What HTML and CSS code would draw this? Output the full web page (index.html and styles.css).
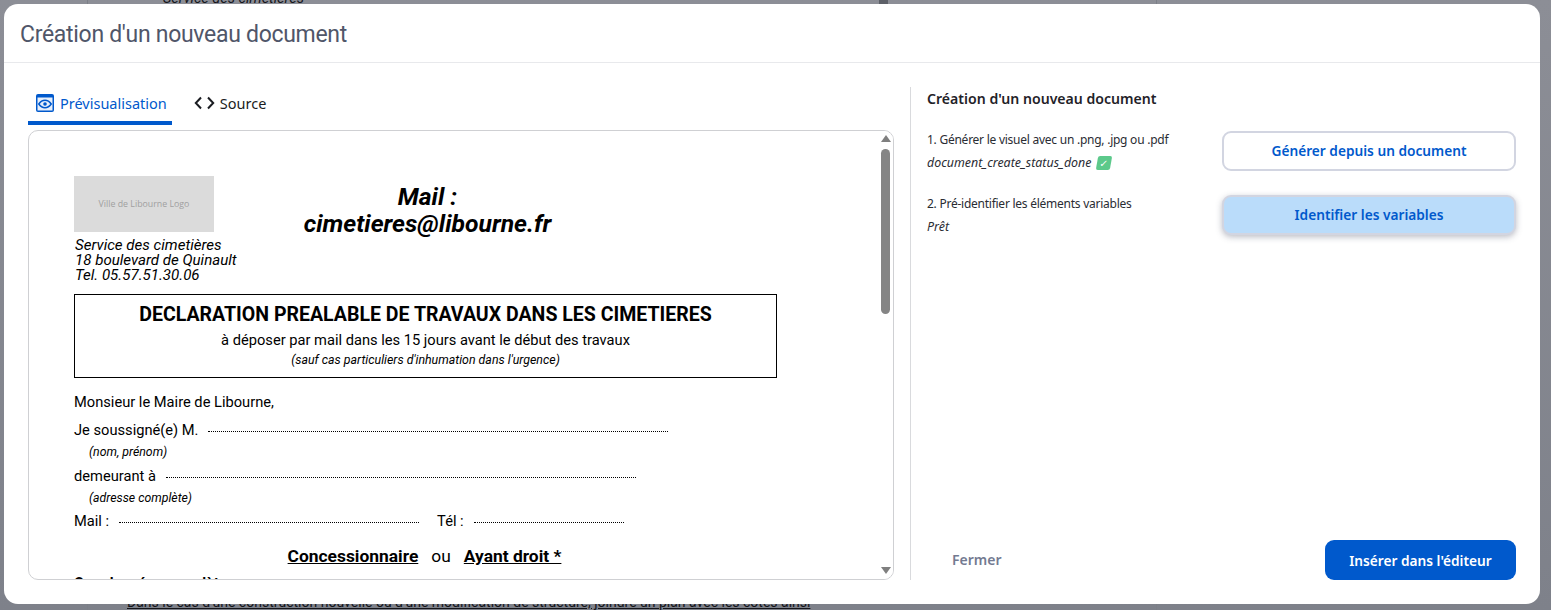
FILE: index.html
```html
<!DOCTYPE html>
<html lang="fr">
<head>
    <meta charset="UTF-8">
    <meta name="viewport" content="width=device-width, initial-scale=1.0">
    <title>Création d'un nouveau document</title>
    <link rel="stylesheet" href="styles.css">
</head>
<body>
    <div class="backdrop">
        <div class="backdrop-page">
            <p class="backdrop-top">Service des cimetières</p>
            <p class="backdrop-bottom">Dans le cas d'une construction nouvelle ou d'une modification de structure, joindre un plan avec les cotes ainsi</p>
        </div>
        <div class="backdrop-thumb"></div>
        <div class="backdrop-side"></div>
    </div>
    <div class="modal">
        <header class="modal-header">Création d'un nouveau document</header>
        <div class="modal-body">
            <section class="left">
                <div class="tabs">
                    <div class="tab active">
                        <svg width="18" height="18" viewBox="0 0 18 18">
                            <rect width="18" height="18" rx="2" fill="#0059cc"/>
                            <rect x="1.500" y="3.500" width="15" height="13" fill="#e8f0fb"/>
                            <path d="M2.800 10C4.600 7.300 6.700 6.200 9 6.200s4.400 1.100 6.200 3.800c-1.800 2.700-3.900 3.800-6.200 3.800S4.600 12.700 2.800 10z" fill="none" stroke="#0059cc" stroke-width="1.500"/>
                            <circle cx="9" cy="10" r="1.800" fill="#0059cc"/>
                        </svg>
                        Prévisualisation
                    </div>
                    <div class="tab">
                        <svg width="21" height="14" viewBox="0 0 21 14">
                            <path d="M7 1.500 1.800 7 7 12.500M14 1.500 19.200 7 14 12.500" fill="none" stroke="#1b1d22" stroke-width="2"/>
                        </svg>
                        Source
                    </div>
                </div>
                <div class="preview">
                    <div class="doc">
                        <div class="doc-head">
                            <div class="doc-contact">
                                <div class="logo">Ville de Libourne Logo</div>
                                <div class="address">Service des cimetières<br>18 boulevard de Quinault<br>Tel. 05.57.51.30.06</div>
                            </div>
                            <div class="doc-mail">Mail :<br>cimetieres@libourne.fr</div>
                        </div>
                        <div class="doc-box">
                            <h1>DECLARATION PREALABLE DE TRAVAUX DANS LES CIMETIERES</h1>
                            <p class="box-sub">à déposer par mail dans les 15 jours avant le début des travaux</p>
                            <p class="box-note">(sauf cas particuliers d'inhumation dans l'urgence)</p>
                        </div>
                        <p class="doc-line first">Monsieur le Maire de Libourne,</p>
                        <div class="doc-line fill">Je soussigné(e) M. <span class="dots w-name"></span></div>
                        <p class="doc-hint">(nom, prénom)</p>
                        <div class="doc-line fill">demeurant à <span class="dots w-addr"></span></div>
                        <p class="doc-hint">(adresse complète)</p>
                        <div class="doc-line fill mail-line">Mail : <span class="dots w-mail"></span><span class="tel">Tél :</span><span class="dots w-tel"></span></div>
                        <div class="doc-choice"><u>Concessionnaire</u><span>ou</span><u>Ayant droit *</u></div>
                        <p class="doc-cut">Coordonnées complètes</p>
                    </div>
                    <div class="scrollbar">
                        <span class="arrow up"></span>
                        <span class="thumb"></span>
                        <span class="arrow down"></span>
                    </div>
                </div>
            </section>
            <aside class="right">
                <h2>Création d'un nouveau document</h2>
                <div class="step">
                    <div class="step-text">
                        <p>1. Générer le visuel avec un .png, .jpg ou .pdf</p>
                        <p class="status">document_create_status_done <span class="check">✓</span></p>
                    </div>
                    <button class="btn btn-outline">Générer depuis un document</button>
                </div>
                <div class="step">
                    <div class="step-text">
                        <p>2. Pré-identifier les éléments variables</p>
                        <p class="status">Prêt</p>
                    </div>
                    <button class="btn btn-light">Identifier les variables</button>
                </div>
                <div class="actions">
                    <button class="btn-close">Fermer</button>
                    <button class="btn btn-primary">Insérer dans l'éditeur</button>
                </div>
            </aside>
        </div>
    </div>
</body>
</html>
```

FILE: styles.css
```css
html, body {
    margin: 0;
    height: 100%;
    overflow: hidden;
}
body {
    font-family: "Noto Sans", sans-serif;
    padding: 4px 11px 6px 4px;
    box-sizing: border-box;
}
p, h1, h2 {
    margin: 0;
}
.backdrop {
    position: absolute;
    inset: 0;
    display: flex;
    padding-left: 87px;
    background: linear-gradient(#8c8e96, #7e818a);
}
.backdrop-page {
    position: relative;
    width: 791px;
    flex: none;
    border-left: 1px solid #7c7f87;
    color: #14151a;
    font-family: "Roboto", sans-serif;
    font-size: 14px;
}
.backdrop-top {
    position: absolute;
    top: -10px;
    left: 75px;
    font-size: 14.500px;
    font-style: italic;
}
.backdrop-bottom {
    position: absolute;
    bottom: 0;
    left: 39px;
    text-decoration: underline;
    white-space: nowrap;
}
.backdrop-thumb {
    width: 9px;
    flex: none;
    height: 12px;
    background-color: #5d6068;
}
.backdrop-side {
    width: 268px;
    flex: none;
    border-right: 1px solid #7c7f87;
}
.modal {
    position: relative;
    height: 600px;
    display: flex;
    flex-direction: column;
    background-color: #fff;
    border-radius: 14px;
}
.modal-header {
    height: 59px;
    flex: none;
    box-sizing: border-box;
    padding: 2px 0 0 16px;
    display: flex;
    align-items: center;
    font-family: "Roboto", sans-serif;
    font-size: 23px;
    letter-spacing: -0.300px;
    color: #505669;
    border-bottom: 1px solid #e8e9ec;
}
.modal-body {
    flex: 1;
    display: flex;
    padding: 24px;
    min-height: 0;
}
.left {
    width: 866px;
    flex: none;
    margin-right: 16px;
}
.tabs {
    display: flex;
    height: 38px;
    gap: 20px;
    margin-bottom: 5px;
}
.tab {
    display: flex;
    align-items: center;
    gap: 5px;
    padding: 0 6px 2px 2px;
    font-size: 14.500px;
    color: #1b1d22;
    height: 32px;
}
.tab.active {
    padding: 0 5px 2px 8px;
    gap: 6px;
    color: #0059cc;
    border-bottom: 4px solid #0059cc;
}
.preview {
    height: 448px;
    display: flex;
    border: 1px solid #cfd0d3;
    border-radius: 10px;
    overflow: hidden;
    background-color: #fff;
}
.doc {
    flex: 1;
    padding: 45px 0 0 45px;
    font-family: "Roboto", sans-serif;
    color: #000;
    overflow: hidden;
}
.doc-head {
    display: flex;
    height: 118px;
}
.doc-contact {
    width: 220px;
}
.logo {
    width: 140px;
    height: 56px;
    display: flex;
    align-items: center;
    justify-content: center;
    background-color: #dbdbdb;
    color: #a0a0a0;
    font-family: "Open Sans", sans-serif;
    font-size: 8.800px;
}
.address {
    margin: 6px 0 0 1px;
    font-size: 15.100px;
    line-height: 15px;
    font-style: italic;
}
.doc-mail {
    width: 267px;
    margin-top: 7px;
    text-align: center;
    font-size: 24.700px;
    line-height: 27px;
    font-weight: 700;
    font-style: italic;
}
.doc-box {
    width: 701px;
    height: 82px;
    border: 1px solid #000;
    text-align: center;
}
.doc-box h1 {
    margin-top: 8px;
    font-size: 19.550px;
    line-height: 24px;
    font-weight: 700;
}
.box-sub {
    margin-top: 4px;
    font-size: 14.670px;
    line-height: 18px;
}
.box-note {
    margin-top: 4px;
    font-size: 12.370px;
    line-height: 15px;
    font-style: italic;
}
.doc-line {
    font-size: 14.670px;
    line-height: 18px;
}
.doc-line.first {
    margin-top: 15px;
}
.doc-line.fill {
    display: flex;
    align-items: baseline;
    margin-top: 10px;
}
.doc-hint {
    margin: 4px 0 0 15px;
    font-size: 12.300px;
    line-height: 18px;
    font-style: italic;
}
.doc-hint + .doc-line.fill {
    margin-top: 6px;
}
.doc-hint + .doc-line.mail-line {
    margin-top: 5px;
}
.dots {
    display: inline-block;
    height: 0;
    margin-left: 10px;
    border-bottom: 1px dotted #000;
    position: relative;
    top: -3px;
}
.w-name { width: 460px; }
.w-addr { width: 470px; }
.w-mail { width: 300px; }
.w-tel { width: 150px; }
.tel {
    margin-left: 18px;
    white-space: pre;
}
.doc-choice {
    width: 701px;
    margin-top: 15px;
    display: flex;
    justify-content: center;
    gap: 13px;
    font-size: 17.400px;
    line-height: 22px;
    font-weight: 700;
}
.doc-choice span {
    font-weight: 400;
}
.doc-cut {
    margin-top: 7px;
    font-size: 14.670px;
    font-weight: 700;
}
.scrollbar {
    width: 15px;
    flex: none;
    display: flex;
    flex-direction: column;
    align-items: center;
    background-color: #fff;
}
.arrow {
    width: 0;
    height: 0;
    margin-top: 4px;
    border-left: 5px solid transparent;
    border-right: 5px solid transparent;
}
.arrow.up {
    border-bottom: 7px solid #7f7f7f;
}
.arrow.down {
    margin-top: auto;
    margin-bottom: 5px;
    border-top: 7px solid #7f7f7f;
}
.thumb {
    width: 9px;
    height: 165px;
    margin-top: 7px;
    border-radius: 5px;
    background-color: #858585;
}
.right {
    flex: 1;
    display: flex;
    flex-direction: column;
    padding-left: 16px;
    border-left: 1px solid #d9dadd;
}
.right h2 {
    margin: 4px 0 21px;
    font-size: 14.100px;
    line-height: 16px;
    font-weight: 600;
    color: #1f2228;
}
.step {
    display: flex;
    justify-content: space-between;
    margin-bottom: 24px;
    height: 40px;
}
.step-text {
    font-size: 12px;
    letter-spacing: -0.250px;
    line-height: 23px;
    color: #2a2c33;
}
.status {
    font-style: italic;
    font-size: 12.400px;
    letter-spacing: 0;
}
.check {
    display: inline-block;
    width: 14px;
    height: 14px;
    margin-left: 2px;
    line-height: 14px;
    border-radius: 2px;
    background-color: #5cc98b;
    color: #fff;
    font-size: 10px;
    font-style: normal;
    text-align: center;
    transform: skewX(-10deg);
}
.btn {
    width: 294px;
    height: 40px;
    margin-top: 3px;
    padding: 0 0 2px;
    border-radius: 9px;
    font-family: "Noto Sans", sans-serif;
    font-size: 13.700px;
    font-weight: 600;
    cursor: pointer;
}
.btn-outline {
    background-color: #fff;
    color: #0059cc;
    border: 2px solid #d2d5e1;
}
.btn-light {
    background-color: #badcfa;
    color: #0059cc;
    border: 2px solid #d2d5e1;
    box-shadow: 0 2px 6px rgba(60, 65, 90, 0.35);
}
.actions {
    margin-top: auto;
    display: flex;
    justify-content: space-between;
    align-items: center;
}
.btn-close {
    margin: 0 0 2px 25px;
    padding: 0;
    border: none;
    background: none;
    color: #737a91;
    font-family: "Noto Sans", sans-serif;
    font-size: 14px;
    font-weight: 600;
}
.btn-primary {
    width: 191px;
    margin-top: 0;
    padding: 0;
    background-color: #0059cc;
    color: #fff;
    border: none;
}
```
